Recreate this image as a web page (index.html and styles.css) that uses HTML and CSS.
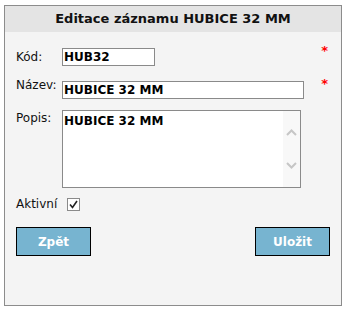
FILE: index.html
```html
<!DOCTYPE html>
<html lang="cs">
<head>
    <meta charset="UTF-8">
    <title>Editace záznamu</title>
    <link rel="stylesheet" href="styles.css">
</head>
<body>
    <div class="panel">
        <div class="panel-title">Editace záznamu HUBICE 32 MM</div>

        <div class="panel-body">
            <div class="row row-kod">
                <label class="lbl" for="kod">Kód:</label>
                <input class="txt txt-short" type="text" id="kod" value="HUB32">
                <span class="req">*</span>
            </div>

            <div class="row row-nazev">
                <label class="lbl lbl-up" for="nazev">Název:</label>
                <input class="txt txt-long" type="text" id="nazev" value="HUBICE 32 MM">
                <span class="req">*</span>
            </div>

            <div class="row row-popis">
                <label class="lbl lbl-top" for="popis">Popis:</label>
                <div class="memo">
                    <textarea id="popis">HUBICE 32 MM</textarea>
                    <div class="memo-scroll">
                        <svg width="11" height="7" viewBox="0 0 11 7"><polyline points="1,6 5.5,1.5 10,6" fill="none" stroke="#c6c6c6" stroke-width="2"/></svg>
                        <svg width="11" height="7" viewBox="0 0 11 7"><polyline points="1,1 5.5,5.5 10,1" fill="none" stroke="#c6c6c6" stroke-width="2"/></svg>
                    </div>
                </div>
            </div>

            <div class="row row-aktivni">
                <span class="lbl lbl-check">Aktivní</span>
                <span class="check">
                    <svg width="11" height="11" viewBox="0 0 11 11"><polyline points="2,5.5 4.5,8.5 9,2" fill="none" stroke="#222" stroke-width="1.6"/></svg>
                </span>
            </div>

            <div class="buttons">
                <button class="btn">Zpět</button>
                <button class="btn">Uložit</button>
            </div>
        </div>
    </div>
</body>
</html>
```

FILE: styles.css
```css
body {
    margin: 0;
    background: #fff;
    font-family: "DejaVu Sans", Verdana, sans-serif;
    font-size: 12px;
    color: #111;
}

.panel {
    box-sizing: border-box;
    width: 338px;
    height: 301px;
    margin: 5px 0 0 4px;
    border: 1px solid #8c8c8c;
    background: #f4f4f4;
}

.panel-title {
    height: 26px;
    line-height: 26px;
    background: #e4e4e4;
    text-align: center;
    font-weight: bold;
    font-size: 13px;
    color: #111;
}

.panel-body {
    padding: 16px 11px 0 11px;
}

.row {
    display: flex;
    align-items: flex-start;
}

.row-nazev {
    margin-top: 15px;
}

.row-popis {
    margin-top: 11px;
}

.row-aktivni {
    margin-top: 9px;
    align-items: center;
}

.lbl {
    width: 46px;
    flex: none;
    line-height: 18px;
}

.lbl-up {
    margin-top: -5px;
}

.lbl-top {
    line-height: 14px;
    margin-top: 1px;
}

.lbl-check {
    width: 51px;
    line-height: 14px;
}

.txt {
    box-sizing: border-box;
    height: 18px;
    margin: 0;
    padding: 0 1px;
    border: 1px solid #8a8a8a;
    background: #fff;
    font-family: "DejaVu Sans", Verdana, sans-serif;
    font-size: 12px;
    font-weight: bold;
    color: #000;
    outline: none;
}

.txt-short {
    width: 93px;
}

.txt-long {
    width: 242px;
}

.req {
    margin-left: auto;
    margin-right: 2px;
    margin-top: -4px;
    color: #f00;
    font-weight: bold;
    font-size: 13px;
    line-height: 14px;
}

.memo {
    box-sizing: border-box;
    display: flex;
    width: 239px;
    height: 78px;
    border: 1px solid #8a8a8a;
    background: #fff;
}

.memo textarea {
    flex: 1;
    margin: 0;
    padding: 3px 1px;
    border: none;
    resize: none;
    outline: none;
    overflow: hidden;
    font-family: "DejaVu Sans", Verdana, sans-serif;
    font-size: 12px;
    font-weight: bold;
    line-height: 14px;
    color: #000;
}

.memo-scroll {
    width: 17px;
    flex: none;
    background: #f8f8f8;
    display: flex;
    flex-direction: column;
    align-items: center;
    justify-content: space-between;
    padding: 18px 0 18px 0;
    box-sizing: border-box;
}

.memo-scroll svg {
    display: block;
}

.check {
    box-sizing: border-box;
    width: 13px;
    height: 13px;
    border: 1px solid #8a8a8a;
    background: #fff;
    display: flex;
    align-items: center;
    justify-content: center;
}

.check svg {
    display: block;
}

.buttons {
    display: flex;
    justify-content: space-between;
    margin-top: 16px;
}

.btn {
    box-sizing: border-box;
    width: 75px;
    height: 29px;
    padding: 0;
    border: 1px solid #000;
    background: #77b4d0;
    color: #fff;
    font-family: "DejaVu Sans", Verdana, sans-serif;
    font-size: 12px;
    font-weight: bold;
    cursor: pointer;
}
```
